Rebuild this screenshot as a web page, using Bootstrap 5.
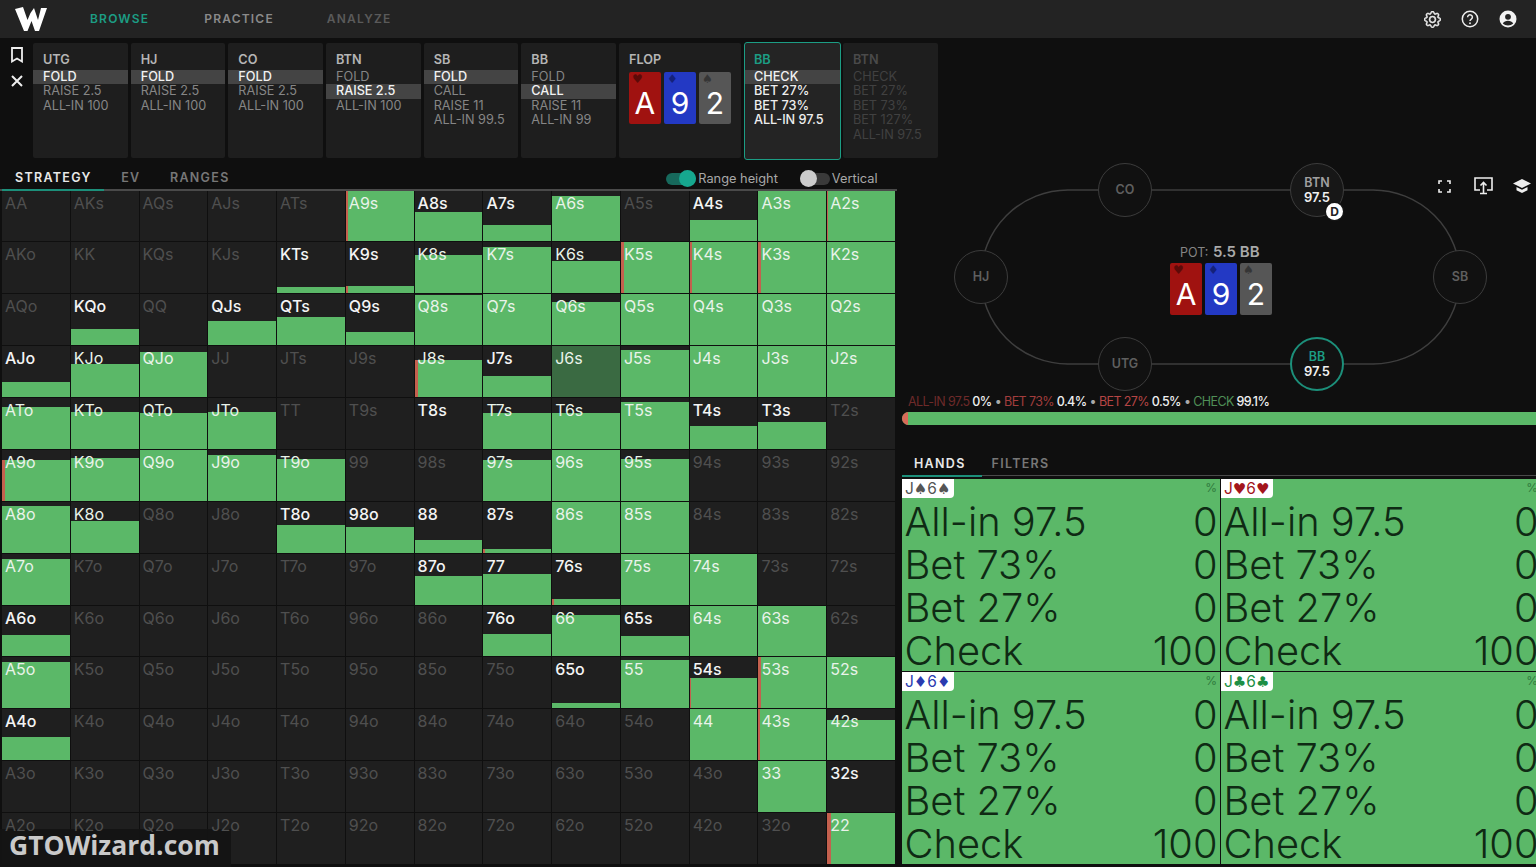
<!DOCTYPE html>
<html lang="en">
<head>
  <meta charset="UTF-8" />
  <title>GTO Wizard - Browse</title>
  <link rel="stylesheet" href="https://cdn.jsdelivr.net/npm/bootstrap@5.3.0/dist/css/bootstrap.min.css" />
  <style>
    body {
      background: #0f0f0f;
      font-family: Inter, "Liberation Sans", sans-serif;
      overflow: hidden;
      height: 867px;
      color: #fff;
    }
    /* top bar */
    .top-bar { height: 38px; background: #232323; padding: 0 !important; flex-wrap: nowrap; }
    .brand-mark { margin-left: 15px; width: 32px; height: 24px; }
    .top-link { font-size: 12px; font-weight: 600; letter-spacing: 1.2px; color: #666; }
    .top-link.is-active { color: #1c9d84; }
    .link-browse { margin-left: 43px; }
    .link-practice { margin-left: 55px; color: #8a8a8a; }
    .link-analyze { margin-left: 53px; color: #5a5a5a; }
    .top-icons { gap: 20px; margin-right: 19px; }

    /* action strip */
    .action-strip { height: 122px; }
    .strip-side { width: 33px; padding-top: 9px; gap: 12px; }
    .street-list { padding-top: 5px; gap: 3px; }
    .street-box {
      width: 94.67px; height: 115px; background: #1e1e1e; border-radius: 2px;
      padding-top: 10px; font-size: 12.7px; line-height: 14.5px; color: #868686;
    }
    .street-title { font-weight: 600; color: #b5b5b5; padding: 0 10px 1px; height: 16.5px; }
    .street-line { padding: 0 10px; white-space: nowrap; }
    .street-line.is-picked { background: #444; color: #f2f2f2; font-weight: 500; }
    .street-flop { width: 122px; }
    .street-current {
      width: 97px; height: 118px; margin-top: -1px; padding-top: 10px;
      border: 1.5px solid #1c9d84; border-radius: 3px; background: #242424; color: #eee; font-weight: 500;
    }
    .street-current .street-title { color: #1c9d84; padding-left: 9px; }
    .street-current .street-line { padding-left: 9px; }
    .street-next { color: #414141; margin-left: -1px; width: 95px; }
    .street-next .street-title { color: #4a4a4a; }

    /* board cards */
    .board-row { gap: 3px; }
    .street-flop .board-row { padding-left: 10px; margin-top: 2px; }
    .board-card {
      width: 32px; height: 52px; border-radius: 2px; line-height: 1;
      display: flex; flex-direction: column; padding-top: 2px; align-items: center;
    }
    .board-suit { font-family: "DejaVu Sans", sans-serif; font-size: 12px; height: 11px; line-height: 11px; align-self: flex-start; margin-left: 3px; }
    .board-rank { font-size: 30px; color: #fff; font-weight: 400; margin-top: 3px; }
    .suit-h { background: #a01210; color: #5c0a08; }
    .suit-d { background: #2339c4; color: #14217a; }
    .suit-s { background: #565656; color: #353535; }

    /* left panel */
    .left-panel { width: 897px; flex: none; }
    .tab-row { height: 30.5px; padding: 9px 0 0 2px; border-bottom: 2.5px solid #4a4a4a; position: relative; }
    .tab-item { font-size: 12.5px; font-weight: 600; letter-spacing: 1.3px; color: #777; }
    .tab-item.is-active { color: #e8e8e8; }
    .tab-strategy { margin-left: 13px; }
    .tab-ev { margin-left: 29.5px; }
    .tab-ranges { margin-left: 29.5px; }
    .tab-mark { position: absolute; left: 2px; bottom: -2.5px; width: 102px; height: 2.5px; background: #1c8f7a; }
    .toggle-row { margin-left: auto; margin-right: 19.5px; font-size: 12.8px; color: #a8a8a8; }
    .mini-switch { width: 30px; height: 12px; border-radius: 6px; background: #3a3a3a; display: flex; align-items: center; }
    .mini-switch.is-on { background: #17695c; justify-content: flex-end; }
    .switch-knob { width: 17px; height: 17px; border-radius: 50%; background: #ccc; flex: none; }
    .is-on .switch-knob { background: #16a78f; }
    .toggle-gap { width: 22px; }
    .toggle-text { margin-left: 2px; }

    /* range grid */
    .range-grid {
      display: grid; grid-template-columns: repeat(13, 1fr); grid-template-rows: repeat(13, 1fr);
      gap: 1px; height: 673.5px; margin-left: 2px; width: 893px;
    }
    .range-cell { display: grid; background: #1f1f1f; overflow: hidden; min-height: 0; }
    .range-cell > * { grid-area: 1 / 1; }
    .range-bar { background: #5bb868; align-self: end; border-left: 0 solid #c4604e; }
    .range-bar.is-selected { background: #3a6a42; }
    .range-label { font-size: 16px; line-height: 18px; padding: 3px 0 0 3px; color: #4f4f4f; z-index: 1; }
    .range-label.is-live { color: #f4f4f4; font-weight: 500; }
    .range-label.on-green { color: #e9f3ea; font-weight: 400; }

    /* watermark */
    .water-mark {
      position: absolute; left: 0; bottom: 0; width: 231px; height: 38px; background: rgba(20,20,20,.92);
      color: #c9c9c9; font-family: "Open Sans", sans-serif; font-weight: 700; font-size: 26.5px; line-height: 33px; padding-left: 9px;
    }

    /* table */
    .right-panel { width: 639px; flex: none; overflow: hidden; height: 707px; }
    .table-area { position: relative; height: 235px; }
    .table-oval { position: absolute; left: 0; top: 0; }
    .seat {
      position: absolute; width: 54px; height: 54px; border-radius: 50%; transform: translate(-50%, -50%);
      border: 1.5px solid #3c3c3c; background: #111; color: #5f5f5f; font-size: 12.5px; font-weight: 600;
      line-height: 14px; display: flex; flex-direction: column; align-items: center; justify-content: center;
    }
    .seat-stack { color: #f0f0f0; font-size: 13px; }
    .seat-name { color: #a0a0a0; }
    .seat-co { left: 228px; top: 30px; }
    .seat-btn { left: 420px; top: 30px; background: #171717; }
    .seat-hj { left: 84px; top: 117px; }
    .seat-sb { left: 563px; top: 117px; }
    .seat-utg { left: 228px; top: 204px; }
    .seat-bb { left: 420px; top: 204px; border: 2px solid #1c8f7a; background: #121212; }
    .seat-bb .seat-name { color: #1c9d84; }
    .dealer-chip {
      position: absolute; left: 35px; top: 39px; width: 17px; height: 17px; border-radius: 50%; background: #fff;
      box-shadow: 0 0 0 1.5px #151515; color: #222; font-size: 12px; font-weight: 700;
      line-height: 17px; text-align: center;
    }
    .pot-block { position: absolute; left: 273px; top: 82px; width: 102px; }
    .pot-text { font-size: 12.5px; color: #858585; line-height: 20px; white-space: nowrap; padding-left: 10px; }
    .pot-text b { font-size: 15px; font-weight: 600; color: #a9a9a9; margin-left: 1px; }
    .table-tools { position: absolute; right: 5px; top: 17px; gap: 20px; }
    .tool-fullscreen { margin-right: 3px; }

    /* stats */
    .stat-line { height: 14px; line-height: 14px; font-size: 12.5px; letter-spacing: -.6px; padding-left: 11px; white-space: nowrap; color: #eee; font-weight: 500; }
    .stat-line span { font-weight: 400; }
    .stat-allin { color: #6e2a2a; }
    .stat-bet1 { color: #a23d3d; }
    .stat-bet2 { color: #b64545; }
    .stat-check { color: #4f8f57; }
    .stat-dot { color: #aaa; margin: 0 3px; }
    .stack-bar { height: 13px; margin: 3px 0 0 5px; background: #5bb868; border-radius: 7px 0 0 7px; overflow: hidden; }
    .stack-bar div { width: 6px; height: 100%; background: #d86a58; }

    /* hands */
    .hands-tabs { height: 26px; margin: 25px 0 0 5px; padding-top: 4px; border-bottom: 1.5px solid #4a4a4a; position: relative; }
    .tab-hands { margin-left: 12px; }
    .tab-filters { margin-left: 26px; }
    .hands-mark { position: absolute; left: 0; bottom: -1.5px; width: 80px; height: 1.5px; background: #1c8f7a; }
    .hand-grid { display: grid; grid-template-columns: 318px 320px; grid-auto-rows: 192px; gap: 1px; margin: 3px 0 0 5px; width: 640px; }
    .hand-box { background: #5bb868; color: #0f2a14; }
    .hand-head { height: 22px; display: flex; justify-content: space-between; align-items: flex-start; }
    .hand-tag { background: #fff; height: 19px; line-height: 19px; font-size: 15.5px; padding: 0 4px 0 3px; border-radius: 0 0 4px 0; white-space: nowrap; }
    .tag-suit { font-family: "DejaVu Sans", sans-serif; font-size: 15px; line-height: 15px; }
    .hand-pct { font-size: 12px; line-height: 18px; color: #2f7a3d; margin-right: 3px; }
    .hand-row { display: flex; justify-content: space-between; font-size: 39.8px; font-weight: 300; line-height: 42px; margin-bottom: 1px; padding: 0 2.5px; white-space: nowrap; }
    .tag-s { color: #555; }
    .tag-h { color: #a3151c; }
    .tag-d { color: #2a3bb0; }
    .tag-c { color: #1d8f45; }
  </style>
</head>
<body class="position-relative">

  <!-- top bar -->
  <nav class="navbar top-bar">
    <div class="d-flex align-items-center">
      <svg class="brand-mark" viewBox="0 0 32 24" fill="#fff"><path d="M0 2 8 0 12.5 13 15.5 6 19 1 23 13 26 1 32 1 24 24 20 24 16.5 14 12.5 24 9 24Z"/></svg>
      <a class="top-link is-active link-browse text-decoration-none" href="#">BROWSE</a>
      <a class="top-link link-practice text-decoration-none" href="#">PRACTICE</a>
      <a class="top-link link-analyze text-decoration-none" href="#">ANALYZE</a>
    </div>
    <div class="d-flex align-items-center top-icons">
      <svg width="17" height="17" viewBox="0 0 16 16" fill="#eee" stroke="#eee" stroke-width=".5"><path d="M8 4.754a3.246 3.246 0 1 0 0 6.492 3.246 3.246 0 0 0 0-6.492zM5.754 8a2.246 2.246 0 1 1 4.492 0 2.246 2.246 0 0 1-4.492 0z"/><path d="M9.796 1.343c-.527-1.79-3.065-1.79-3.592 0l-.094.319a.873.873 0 0 1-1.255.52l-.292-.16c-1.64-.892-3.433.902-2.54 2.541l.159.292a.873.873 0 0 1-.52 1.255l-.319.094c-1.79.527-1.79 3.065 0 3.592l.319.094a.873.873 0 0 1 .52 1.255l-.16.292c-.892 1.64.901 3.434 2.541 2.54l.292-.159a.873.873 0 0 1 1.255.52l.094.319c.527 1.79 3.065 1.79 3.592 0l.094-.319a.873.873 0 0 1 1.255-.52l.292.16c1.64.893 3.434-.902 2.54-2.541l-.159-.292a.873.873 0 0 1 .52-1.255l.319-.094c1.79-.527 1.79-3.065 0-3.592l-.319-.094a.873.873 0 0 1-.52-1.255l.16-.292c.893-1.64-.902-3.433-2.541-2.54l-.292.159a.873.873 0 0 1-1.255-.52l-.094-.319zm-2.633.283c.246-.835 1.428-.835 1.674 0l.094.319a1.873 1.873 0 0 0 2.693 1.115l.291-.16c.764-.415 1.6.42 1.184 1.185l-.159.292a1.873 1.873 0 0 0 1.116 2.692l.318.094c.835.246.835 1.428 0 1.674l-.319.094a1.873 1.873 0 0 0-1.115 2.693l.16.291c.415.764-.42 1.6-1.185 1.184l-.291-.159a1.873 1.873 0 0 0-2.693 1.116l-.094.318c-.246.835-1.428.835-1.674 0l-.094-.319a1.873 1.873 0 0 0-2.692-1.115l-.292.16c-.764.415-1.6-.42-1.184-1.185l.159-.291A1.873 1.873 0 0 0 1.945 8.93l-.319-.094c-.835-.246-.835-1.428 0-1.674l.319-.094A1.873 1.873 0 0 0 3.06 4.377l-.16-.292c-.415-.764.42-1.6 1.185-1.184l.292.159a1.873 1.873 0 0 0 2.692-1.115l.094-.319z"/></svg>
      <svg width="18" height="18" viewBox="0 0 18 18"><circle cx="9" cy="9" r="7.7" fill="none" stroke="#eee" stroke-width="1.5"/><path d="M6.6 7.2a2.4 2.4 0 1 1 3.7 2c-.9.6-1.3 1-1.3 1.9" fill="none" stroke="#eee" stroke-width="1.5"/><circle cx="9" cy="13.2" r=".95" fill="#eee"/></svg>
      <svg width="18" height="18" viewBox="0 0 18 18"><circle cx="9" cy="9" r="8.5" fill="#f2f2f2"/><circle cx="9" cy="6.8" r="2.9" fill="#232323"/><path d="M3.8 13.6c1-2 3-2.9 5.2-2.9s4.200.9 5.200 2.900c-1.300 1.300-3.200 2-5.200 2s-3.900-.7-5.200-2Z" fill="#232323"/></svg>
    </div>
  </nav>

  <!-- action strip -->
  <div class="d-flex action-strip">
    <div class="strip-side d-flex flex-column align-items-center">
      <svg width="12" height="16" viewBox="0 0 12 16" fill="none" stroke="#eee" stroke-width="1.8"><path d="M1 1h10v13.500L6 11.500 1 14.500Z"/></svg>
      <svg width="12" height="12" viewBox="0 0 12 12" stroke="#eee" stroke-width="2"><path d="M1 1 11 11M11 1 1 11"/></svg>
    </div>
    <div class="street-list d-flex">
      <div class="street-box"><div class="street-title">UTG</div><div class="street-line is-picked">FOLD</div><div class="street-line">RAISE 2.5</div><div class="street-line">ALL-IN 100</div></div>
      <div class="street-box"><div class="street-title">HJ</div><div class="street-line is-picked">FOLD</div><div class="street-line">RAISE 2.5</div><div class="street-line">ALL-IN 100</div></div>
      <div class="street-box"><div class="street-title">CO</div><div class="street-line is-picked">FOLD</div><div class="street-line">RAISE 2.5</div><div class="street-line">ALL-IN 100</div></div>
      <div class="street-box"><div class="street-title">BTN</div><div class="street-line">FOLD</div><div class="street-line is-picked">RAISE 2.5</div><div class="street-line">ALL-IN 100</div></div>
      <div class="street-box"><div class="street-title">SB</div><div class="street-line is-picked">FOLD</div><div class="street-line">CALL</div><div class="street-line">RAISE 11</div><div class="street-line">ALL-IN 99.5</div></div>
      <div class="street-box"><div class="street-title">BB</div><div class="street-line">FOLD</div><div class="street-line is-picked">CALL</div><div class="street-line">RAISE 11</div><div class="street-line">ALL-IN 99</div></div>
      <div class="street-box street-flop">
        <div class="street-title">FLOP</div>
        <div class="board-row d-flex">
          <div class="board-card suit-h"><span class="board-suit">♥</span><span class="board-rank">A</span></div>
          <div class="board-card suit-d"><span class="board-suit">♦</span><span class="board-rank">9</span></div>
          <div class="board-card suit-s"><span class="board-suit">♠</span><span class="board-rank">2</span></div>
        </div>
      </div>
      <div class="street-box street-current"><div class="street-title">BB</div><div class="street-line is-picked">CHECK</div><div class="street-line">BET 27%</div><div class="street-line">BET 73%</div><div class="street-line">ALL-IN 97.5</div></div>
      <div class="street-box street-next"><div class="street-title">BTN</div><div class="street-line">CHECK</div><div class="street-line">BET 27%</div><div class="street-line">BET 73%</div><div class="street-line">BET 127%</div><div class="street-line">ALL-IN 97.5</div></div>
    </div>
  </div>

  <div class="d-flex">
    <!-- strategy matrix -->
    <div class="left-panel">
      <div class="tab-row d-flex align-items-center">
        <span class="tab-item is-active tab-strategy">STRATEGY</span>
        <span class="tab-item tab-ev">EV</span>
        <span class="tab-item tab-ranges">RANGES</span>
        <div class="tab-mark"></div>
        <div class="toggle-row d-flex align-items-center">
          <div class="mini-switch is-on"><div class="switch-knob"></div></div>
          <span class="toggle-text">Range height</span>
          <div class="toggle-gap"></div>
          <div class="mini-switch"><div class="switch-knob"></div></div>
          <span class="toggle-text">Vertical</span>
        </div>
      </div>
      <div class="range-grid" id="rangeGrid"></div>
    </div>

    <!-- table and hands -->
    <div class="right-panel">
      <div class="table-area">
        <svg class="table-oval" width="639" height="235"><rect x="84" y="30" width="479" height="174" rx="87" fill="none" stroke="#3e3e3e" stroke-width="1.5"/></svg>
        <div class="seat seat-co">CO</div>
        <div class="seat seat-btn"><span class="seat-name">BTN</span><span class="seat-stack">97.5</span><div class="dealer-chip">D</div></div>
        <div class="seat seat-hj">HJ</div>
        <div class="seat seat-sb">SB</div>
        <div class="seat seat-utg">UTG</div>
        <div class="seat seat-bb"><span class="seat-name">BB</span><span class="seat-stack">97.5</span></div>
        <div class="pot-block">
          <div class="pot-text">POT: <b>5.5 BB</b></div>
          <div class="board-row d-flex">
            <div class="board-card suit-h"><span class="board-suit">♥</span><span class="board-rank">A</span></div>
            <div class="board-card suit-d"><span class="board-suit">♦</span><span class="board-rank">9</span></div>
            <div class="board-card suit-s"><span class="board-suit">♠</span><span class="board-rank">2</span></div>
          </div>
        </div>
        <div class="table-tools d-flex align-items-center">
          <svg class="tool-fullscreen" width="13" height="13" viewBox="0 0 13 13" fill="none" stroke="#eee" stroke-width="1.6"><path d="M1 4V1h3M9 1h3v3M12 9v3H9M4 12H1V9"/></svg>
          <svg width="19" height="18" viewBox="0 0 19 18" fill="none" stroke="#eee" stroke-width="1.6"><path d="M6 13H1V1h17v12h-5"/><path d="M9.500 16V6M6.500 8.500 9.500 5.500l3 3M6 16.500h7"/></svg>
          <svg width="18" height="14" viewBox="0 0 18 14" fill="#eee"><path d="M9 0 18 4.500 9 9 0 4.500Z"/><path d="M3.500 8 9 10.700 14.500 8v3.200L9 14l-5.500-2.800Z"/></svg>
        </div>
      </div>

      <div class="stat-line">
        <span class="stat-allin">ALL-IN 97.5</span> 0%<span class="stat-dot">•</span><span class="stat-bet1">BET 73%</span> 0.4%<span class="stat-dot">•</span><span class="stat-bet2">BET 27%</span> 0.5%<span class="stat-dot">•</span><span class="stat-check">CHECK</span> 99.1%
      </div>
      <div class="stack-bar"><div></div></div>

      <div class="hands-tabs d-flex align-items-center">
        <span class="tab-item is-active tab-hands">HANDS</span>
        <span class="tab-item tab-filters">FILTERS</span>
        <div class="hands-mark"></div>
      </div>
      <div class="hand-grid" id="handGrid"></div>
    </div>
  </div>

  <div class="water-mark">GTOWizard.com</div>

  <script src="https://cdn.jsdelivr.net/npm/bootstrap@5.3.0/dist/js/bootstrap.bundle.min.js"></script>
  <script>
    const ranks = "AKQJT98765432".split("");

    // bar height in percent per cell, -1 = not in range (dim label)
    const heights = [
      [-1, -1, -1, -1, -1, 100, 58, 32, 90, -1, 42, 100, 100],
      [-1, -1, -1, -1, 13, 15, 76, 90, 63, 100, 100, 100, 100],
      [-1, 32, -1, 48, 55, 26, 98, 100, 85, 100, 100, 100, 100],
      [30, 65, 88, -1, -1, -1, 72, 42, 100, 93, 100, 100, 100],
      [83, 73, 70, 73, -1, -1, 0, 70, 70, 92, 45, 52, -1],
      [80, 85, 100, 90, 82, -1, -1, 80, 100, 83, -1, -1, -1],
      [92, 63, -1, -1, 55, 50, 25, 8, 100, 100, -1, -1, -1],
      [90, -1, -1, -1, -1, -1, 57, 60, 10, 100, 100, -1, -1],
      [43, -1, -1, -1, -1, -1, -1, 45, 82, 40, 100, 100, -1],
      [92, -1, -1, -1, -1, -1, -1, -1, 10, 95, 60, 100, 100],
      [46, -1, -1, -1, -1, -1, -1, -1, -1, -1, 100, 100, 80],
      [-1, -1, -1, -1, -1, -1, -1, -1, -1, -1, -1, 100, 0],
      [-1, -1, -1, -1, -1, -1, -1, -1, -1, -1, -1, -1, 100]
    ];

    // red strip width on the left edge of a bar
    const redEdge = { A9s: 2, K9s: 2, K5s: 3, K4s: 2, K3s: 3, J8s: 3, A9o: 3, "87s": 2, "76s": 2, "54s": 1, "53s": 3, "43s": 2, "22": 4, A2s: 1 };

    function handName(i, j) {
      if (i === j) return ranks[i] + ranks[j];
      return i < j ? ranks[i] + ranks[j] + "s" : ranks[j] + ranks[i] + "o";
    }

    let gridHtml = "";
    heights.forEach((row, i) => {
      row.forEach((pct, j) => {
        const name = handName(i, j);
        let labelClass = "range-label";
        if (pct >= 0) labelClass += pct > 62 ? " is-live on-green" : " is-live";
        const bar = pct > 0
          ? `<div class="range-bar${name === "J6s" ? " is-selected" : ""}" style="height:${pct}%;border-left-width:${redEdge[name] || 0}px"></div>`
          : "";
        gridHtml += `<div class="range-cell">${bar}<div class="${labelClass}">${name}</div></div>`;
      });
    });
    document.getElementById("rangeGrid").innerHTML = gridHtml;

    const combos = [
      ["♠", "tag-s"],
      ["♥", "tag-h"],
      ["♦", "tag-d"],
      ["♣", "tag-c"]
    ];
    const lines = [["All-in 97.5", 0], ["Bet 73%", 0], ["Bet 27%", 0], ["Check", 100]];

    document.getElementById("handGrid").innerHTML = combos.map(([suit, cls]) => `
      <div class="hand-box">
        <div class="hand-head"><span class="hand-tag ${cls}">J<span class="tag-suit">${suit}</span>6<span class="tag-suit">${suit}</span></span><span class="hand-pct">%</span></div>
        ${lines.map(([label, val]) => `<div class="hand-row"><span>${label}</span><span>${val}</span></div>`).join("")}
      </div>`).join("");
  </script>
</body>
</html>
